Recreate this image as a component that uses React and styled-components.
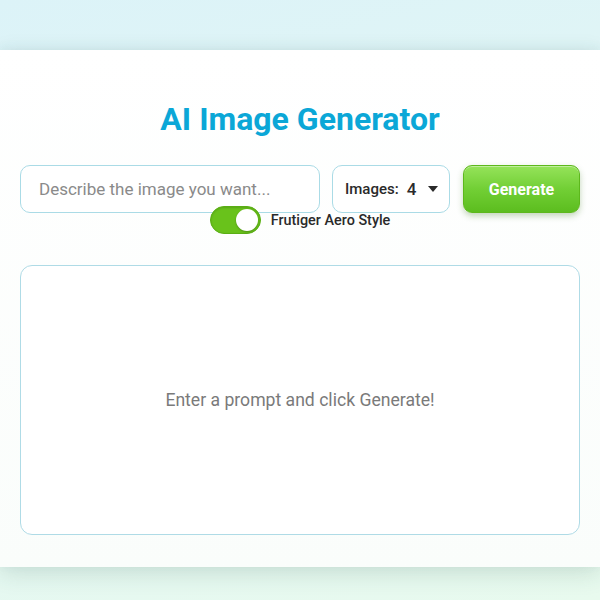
import React, { useState } from 'react';
import styled, { createGlobalStyle } from 'styled-components';

const GlobalStyle = createGlobalStyle`
  html, body {
    margin: 0;
    padding: 0;
  }
  body {
    font-family: 'Roboto', 'Liberation Sans', sans-serif;
    background: linear-gradient(165deg, #dcf3f8 0%, #e2f6f4 50%, #e8faee 100%);
    min-height: 100vh;
  }
`;

const Page = styled.div`
  min-height: 100vh;
  padding: 50px 0 33px 0;
  box-sizing: border-box;
`;

const Card = styled.main`
  background: linear-gradient(180deg, #ffffff 0%, #fafdfb 100%);
  box-shadow: 0 6px 22px rgba(40, 90, 70, 0.16), 0 -2px 10px rgba(60, 120, 140, 0.06);
  padding: 51px 20px 32px 20px;
  display: flex;
  flex-direction: column;
  align-items: stretch;
`;

const Title = styled.h1`
  margin: 0 0 27px 0;
  text-align: center;
  font-family: 'Roboto', sans-serif;
  font-weight: 700;
  font-size: 32px;
  line-height: 37px;
  color: #0ba7d7;
`;

const Controls = styled.div`
  display: flex;
  gap: 12px;
  align-items: stretch;
  height: 48px;
`;

const PromptInput = styled.input`
  width: 300px;
  box-sizing: border-box;
  border: 1px solid #aadbe6;
  border-radius: 10px;
  padding: 0 18px;
  font-family: 'Roboto', sans-serif;
  font-size: 17px;
  color: #333;
  background: #fff;
  outline: none;
  &::placeholder {
    color: #8a8a8a;
  }
`;

const CountSelect = styled.div`
  width: 118px;
  box-sizing: border-box;
  border: 1px solid #aadbe6;
  border-radius: 10px;
  background: #fff;
  display: flex;
  align-items: center;
  padding: 0 12px;
  gap: 8px;
  color: #2a2a2a;
`;

const CountLabel = styled.span`
  font-size: 15px;
  font-weight: 500;
`;

const CountValue = styled.span`
  font-size: 17px;
  font-weight: 500;
  display: flex;
  align-items: center;
  gap: 12px;
`;

const GenerateButton = styled.button`
  width: 117px;
  margin-left: 1px;
  border: 1px solid #5db81c;
  border-radius: 9px;
  background: linear-gradient(180deg, #95e35a 0%, #72cf35 50%, #5cbd1f 100%);
  box-shadow: 0 3px 6px rgba(60, 120, 30, 0.3), inset 0 1px 0 rgba(255, 255, 255, 0.4);
  color: #fff;
  font-family: 'Roboto', sans-serif;
  font-weight: 700;
  font-size: 16px;
  cursor: pointer;
`;

const ToggleRow = styled.label`
  display: flex;
  justify-content: center;
  align-items: center;
  gap: 10px;
  margin-top: -7px;
  height: 28px;
  cursor: pointer;
`;

const Track = styled.span`
  width: 51px;
  height: 28px;
  box-sizing: border-box;
  border-radius: 14px;
  background: ${p => (p.$on ? '#69c21b' : '#c9d4d8')};
  border: 1px solid ${p => (p.$on ? '#5aae14' : '#b5c0c4')};
  display: flex;
  align-items: center;
  justify-content: ${p => (p.$on ? 'flex-end' : 'flex-start')};
  padding: 0 2px;
  box-shadow: inset 0 1px 2px rgba(0, 0, 0, 0.15);
`;

const Knob = styled.span`
  width: 22px;
  height: 22px;
  border-radius: 50%;
  background: #fff;
  box-shadow: 0 1px 2px rgba(0, 0, 0, 0.25);
`;

const ToggleText = styled.span`
  font-size: 14.4px;
  font-weight: 500;
  color: #2a2a2a;
`;

const Gallery = styled.section`
  margin-top: 31px;
  height: 270px;
  box-sizing: border-box;
  border: 1.5px solid #afdbe6;
  border-radius: 12px;
  background: #fff;
  display: flex;
  align-items: center;
  justify-content: center;
`;

const Empty = styled.p`
  margin: 0;
  font-size: 17.6px;
  color: #7a7a7a;
`;

const Caret = () => (
  <svg width="10" height="6" viewBox="0 0 10 6">
    <path d="M0 0 L10 0 L5 6 Z" fill="#2a2a2a" />
  </svg>
);

export default function App() {
  const [aero, setAero] = useState(true);
  return (
    <Page>
      <GlobalStyle />
      <Card>
        <Title>AI Image Generator</Title>
        <Controls>
          <PromptInput placeholder="Describe the image you want..." />
          <CountSelect>
            <CountLabel>Images:</CountLabel>
            <CountValue>
              4 <Caret />
            </CountValue>
          </CountSelect>
          <GenerateButton>Generate</GenerateButton>
        </Controls>
        <ToggleRow onClick={() => setAero(!aero)}>
          <Track $on={aero}>
            <Knob />
          </Track>
          <ToggleText>Frutiger Aero Style</ToggleText>
        </ToggleRow>
        <Gallery>
          <Empty>Enter a prompt and click Generate!</Empty>
        </Gallery>
      </Card>
    </Page>
  );
}
